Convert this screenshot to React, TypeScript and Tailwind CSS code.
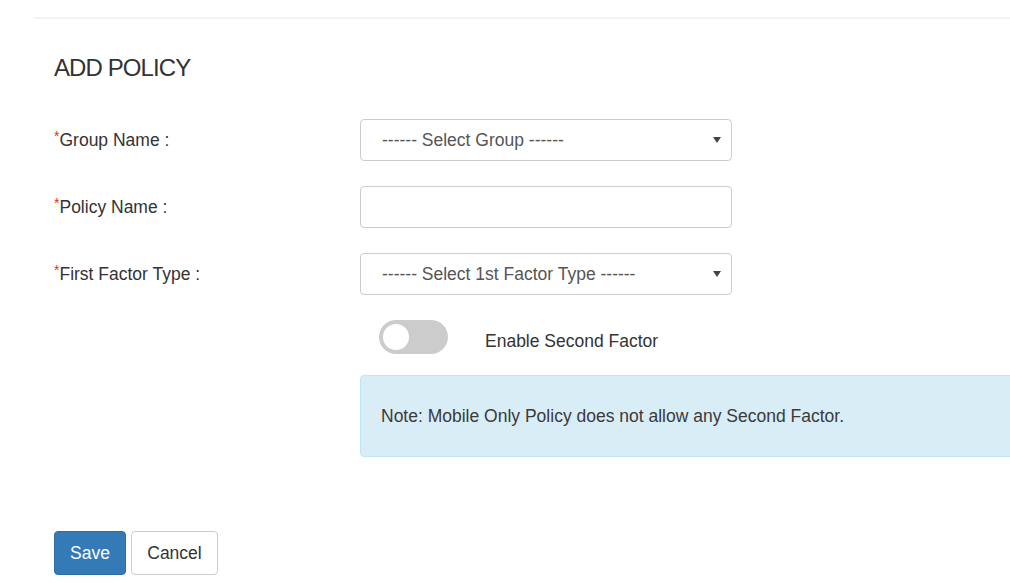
import React from 'react';

const Caret = () => (
  <svg width="8" height="6" viewBox="0 0 8 6" className="absolute right-[10px] top-1/2 -translate-y-1/2">
    <path d="M0 0 H8 L4 6 Z" fill="#444" />
  </svg>
);

const Label = ({ text }: { text: string }) => (
  <label className="text-[17.5px] text-[#333] leading-none">
    <span className="text-[#e0301e] text-[14px] align-top">*</span>
    {text}
  </label>
);

const SelectBox = ({ placeholder }: { placeholder: string }) => (
  <div className="relative h-[42px] w-[372px] rounded-[4px] border border-[#ccc] bg-white flex items-center pl-[21px] text-[17.5px] text-[#555]">
    {placeholder}
    <Caret />
  </div>
);

export default function App() {
  return (
    <div
      className="w-[1010px] h-[583px] overflow-hidden bg-white"
      style={{ fontFamily: '"Liberation Sans", Arial, sans-serif' }}
    >
      <div className="pl-[34px] pt-[17px]">
        <div className="h-[2px] bg-[#f3f3f3]" />
      </div>

      <div className="pl-[54px]">
        <h3 className="mt-[37px] text-[24px] leading-none tracking-[-0.9px] text-[#333]">ADD POLICY</h3>

        <div className="mt-[39px] flex flex-col gap-[25px]">
          <div className="flex items-center">
            <div className="w-[306px] pt-[2px]"><Label text="Group Name :" /></div>
            <SelectBox placeholder="------ Select Group ------" />
          </div>
          <div className="flex items-center">
            <div className="w-[306px] pt-[2px]"><Label text="Policy Name :" /></div>
            <div className="h-[42px] w-[372px] rounded-[4px] border border-[#ccc] bg-white" />
          </div>
          <div className="flex items-center">
            <div className="w-[306px] pt-[2px]"><Label text="First Factor Type :" /></div>
            <SelectBox placeholder="------ Select 1st Factor Type ------" />
          </div>
        </div>

        <div className="mt-[25px] ml-[325px] flex items-center gap-[37px]">
          <div className="h-[34px] w-[69px] rounded-full bg-[#ccc] flex items-center pl-[4px]">
            <div className="h-[26px] w-[26px] rounded-full bg-white" />
          </div>
          <span className="pt-[8px] text-[17.5px] text-[#333]">Enable Second Factor</span>
        </div>

        <div className="mt-[21px] ml-[306px] h-[82px] w-[720px] rounded-[4px] border border-[#bce8f1] bg-[#d9edf7] flex items-center pl-[20px] text-[17.5px] text-[#3a3a3a]">
          Note: Mobile Only Policy does not allow any Second Factor.
        </div>

        <div className="mt-[74px] flex gap-[5px]">
          <button className="h-[44px] w-[72px] rounded-[4px] border border-[#2e6da4] bg-[#337ab7] text-[17.5px] text-white">
            Save
          </button>
          <button className="h-[44px] w-[87px] rounded-[4px] border border-[#ccc] bg-white text-[17.5px] text-[#333]">
            Cancel
          </button>
        </div>
      </div>
    </div>
  );
}
